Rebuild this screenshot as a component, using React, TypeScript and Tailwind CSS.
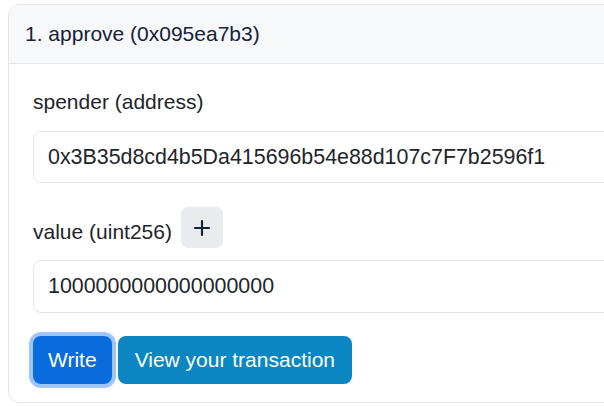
export default function App() {
  return (
    <div className="h-[406px] w-[604px] overflow-hidden bg-white pl-[8px] pt-[4px] font-['Liberation_Sans',Arial,sans-serif] text-[21px] text-[#212529]">
      <div className="w-[720px] overflow-hidden rounded-[12px] border border-[#e4e6e9]">
        <div className="flex h-[59px] items-center border-b border-[#e4e6e9] bg-[#f7f8fa] px-[16px] text-[#16213a]">
          1. approve (0x095ea7b3)
        </div>
        <div className="px-[24px] pb-[18px] pt-[23px]">
          <label className="block leading-[30px]">spender (address)</label>
          <input
            type="text"
            defaultValue="0x3B35d8cd4b5Da415696b54e88d107c7F7b2596f1"
            className="mt-[14px] block h-[52px] w-full rounded-[8px] border border-[#e4e6e9] px-[14px] text-[21.4px] text-[#212529] outline-none"
          />
          <div className="mt-[24px] flex items-start">
            <label className="mt-[10px] leading-[30px]">value (uint256)</label>
            <button className="ml-[9px] flex h-[41px] w-[42px] items-center justify-center rounded-[7px] bg-[#e9ebef] text-[#16213a]">
              <svg width="18" height="18" viewBox="0 0 18 18" fill="none" stroke="currentColor" strokeWidth="2.2" strokeLinecap="round">
                <path d="M9 2v14M2 9h14" />
              </svg>
            </button>
          </div>
          <input
            type="text"
            defaultValue="1000000000000000000"
            className="mt-[12px] block h-[53px] w-full rounded-[8px] border border-[#e4e6e9] px-[14px] text-[21.4px] text-[#212529] outline-none"
          />
          <div className="mt-[23px] flex items-center gap-[6px]">
            <button className="h-[48px] rounded-[8px] bg-[#0a6bdc] px-[15px] text-white ring-4 ring-[#9ec5fe]">
              Write
            </button>
            <button className="h-[48px] rounded-[8px] bg-[#0b86c3] px-[17px] text-white">
              View your transaction
            </button>
          </div>
        </div>
      </div>
    </div>
  )
}
